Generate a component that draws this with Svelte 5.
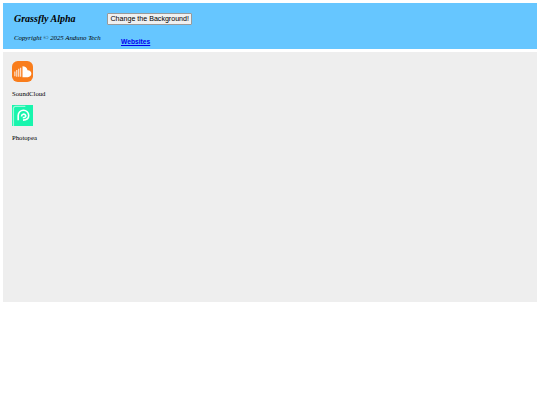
<script>
  const apps = [
    { name: 'SoundCloud', kind: 'sc' },
    { name: 'Photopea', kind: 'pp' }
  ];
</script>

<div class="page">
  <header class="top">
    <div class="brand">
      <h1>Grassfly Alpha</h1>
      <p>Copyright © 2025 Anduno Tech</p>
    </div>
    <div class="actions">
      <button type="button">Change the Background!</button>
      <a href="#websites">Websites</a>
    </div>
  </header>
  <main class="panel">
    {#each apps as app}
      <div class="app">
        {#if app.kind === 'sc'}
          <svg viewBox="0 0 22 22" width="21" height="21" aria-hidden="true">
            <rect width="22" height="22" rx="6" fill="#f97d1c" />
            <path d="M11 5.500c2.700 0 4.800 1.700 5.300 4.100 2.100-.2 4 1.300 4 3.600 0 2.100-1.600 3.700-3.700 3.700H11z" fill="#fff" />
            <path d="M3 11v5M5 9.500v7M7 8v8.500M9 7v9.500" stroke="#fff" stroke-width="1.300" fill="none" opacity=".75" />
          </svg>
        {:else}
          <svg viewBox="0 0 22 22" width="21" height="21" aria-hidden="true">
            <rect width="22" height="22" fill="#18f5ad" />
            <path d="M1.500 22V3.500a2 2 0 0 1 2-2H14" fill="none" stroke="#fff" stroke-width="1.300" opacity=".55" />
            <path d="M6.500 16V11a5.500 5.500 0 0 1 11 0c0 3-2.500 4.800-6 4.800M10 12a2.300 2.300 0 0 1 4.300-1.200c.6 1.400-.6 2.500-3 2.500" fill="none" stroke="#fff" stroke-width="1.700" />
          </svg>
        {/if}
        <span>{app.name}</span>
      </div>
    {/each}
  </main>
</div>

<style>
  :global(body) {
    margin: 0;
    background: #fff;
  }
  .page {
    padding: 3px;
    display: flex;
    flex-direction: column;
    gap: 3px;
    font-family: "Liberation Serif", serif;
    color: #000;
  }
  .top {
    height: 46px;
    background: #66c6ff;
    display: flex;
    box-sizing: border-box;
    padding: 10px 0 0 11px;
  }
  .brand {
    width: 93px;
  }
  h1 {
    margin: 0;
    font-size: 10px;
    line-height: 12px;
    font-weight: bold;
    font-style: italic;
  }
  .brand p {
    margin: 8px 0 0;
    font-size: 6.8px;
    line-height: 9px;
    font-style: italic;
    white-space: nowrap;
  }
  .actions {
    display: flex;
    flex-direction: column;
    align-items: flex-start;
  }
  button {
    height: 12px;
    padding: 0 2.500px;
    font-family: "Liberation Sans", sans-serif;
    font-size: 7.100px;
    line-height: 10px;
    background: #f0f0f0;
    border: 0.5px solid #999;
    border-radius: 1px;
    color: #000;
    white-space: nowrap;
  }
  a {
    margin: 12px 0 0 14px;
    font-family: "Liberation Sans", sans-serif;
    font-size: 6.700px;
    line-height: 9px;
    font-weight: bold;
    color: #0000ee;
    text-decoration: underline;
  }
  .panel {
    height: 250px;
    background: #eeeeee;
    padding: 9px 0 0 9px;
    box-sizing: border-box;
  }
  .app {
    display: flex;
    flex-direction: column;
    align-items: flex-start;
    height: 44px;
  }
  .app svg {
    display: block;
  }
  .app span {
    margin-top: 7px;
    font-size: 6.700px;
    line-height: 9px;
  }
</style>
